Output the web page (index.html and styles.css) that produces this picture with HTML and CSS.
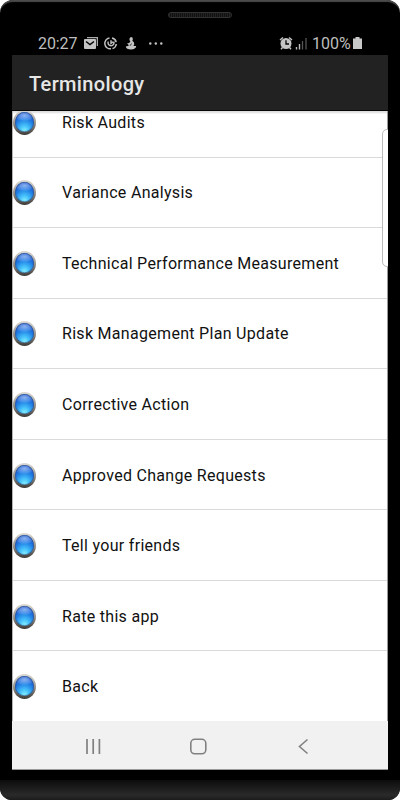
FILE: index.html
```html
<!DOCTYPE html>
<html lang="en">
<head>
<meta charset="utf-8">
<title>Terminology</title>
<link rel="stylesheet" href="styles.css">
</head>
<body>
<div class="phone">
  <div class="speaker"></div>
  <header class="status">
    <span class="clock">20:27</span>
    <svg class="notifications" width="80" height="16" viewBox="0 0 80 16">
      <path d="M3 1h11v9h-1.300V2.300H3z" fill="#aaa"/>
      <rect x="0" y="3" width="12" height="10" rx="1" fill="#c4c4c4"/>
      <path d="M2 5.500l4 3 4-3" fill="none" stroke="#000" stroke-width="1.400"/>
      <g fill="none" stroke="#bebebe" stroke-width="1.500">
        <path d="M25.500 2a5.400 5.400 0 0 0 1.500 10.800M28 2.100a5.400 5.400 0 0 1 4.200 4M32.300 8a5.400 5.400 0 0 1-3.800 4.600"/>
        <path d="M24.300 5.500a3 3 0 1 0 5.400 0M27 4.300v3l2-1.500"/>
      </g>
      <path d="M45.500 2.500l1.300-1.500 1.700.5.300 2-.5 1.300 1.700 1.700.2 2-.8 1.500h2.800c0 2-2.200 3.500-5.200 3.500s-5.200-1.300-5.200-3l2-.5 1.200-.8-2-1.700 2.200-.5 1.300-1.700-1-1z" fill="#c4c4c4"/>
      <path d="M47.500 7.500l-1.500 2.300" stroke="#222" stroke-width=".9"/>
      <g fill="#c4c4c4"><circle cx="66.300" cy="7.500" r="1.200"/><circle cx="71.800" cy="7.500" r="1.200"/><circle cx="77.300" cy="7.500" r="1.200"/></g>
    </svg>
    <svg class="signals" width="30" height="16" viewBox="0 0 30 16">
      <circle cx="7" cy="7.500" r="5.500" fill="#c4c4c4"/>
      <path d="M1 4l3-2.500M13 4l-3-2.500M3.500 11.500L2 13.200M10.500 11.500l1.500 1.700" stroke="#c4c4c4" stroke-width="1.500"/>
      <path d="M7 4.300V8h3" fill="none" stroke="#000" stroke-width="1.300"/>
      <path d="M17.500 11v2.500M20.500 8v5.500" stroke="#bbb" stroke-width="1.400"/>
      <path d="M23.500 5v8.500M27 2v11.500" stroke="#555" stroke-width="1.300"/>
    </svg>
    <span class="percent">100%</span>
    <svg class="battery" width="9" height="14" viewBox="0 0 9 14"><path d="M2.500 1h4v1.500H9V13H0V2.500h2.500z" fill="#c8c8c8"/></svg>
  </header>
  <main class="screen">
    <h1 class="title">Terminology</h1>
    <ul class="list">
      <li class="row"><i class="orb"></i><span>Risk Audits</span></li>
      <li class="row"><i class="orb"></i><span>Variance Analysis</span></li>
      <li class="row"><i class="orb"></i><span>Technical Performance Measurement</span></li>
      <li class="row"><i class="orb"></i><span>Risk Management Plan Update</span></li>
      <li class="row"><i class="orb"></i><span>Corrective Action</span></li>
      <li class="row"><i class="orb"></i><span>Approved Change Requests</span></li>
      <li class="row"><i class="orb"></i><span>Tell your friends</span></li>
      <li class="row"><i class="orb"></i><span>Rate this app</span></li>
      <li class="row"><i class="orb"></i><span>Back</span></li>
    </ul>
    <nav class="nav">
      <svg width="376" height="48" viewBox="0 0 376 48" fill="none" stroke="#818181">
        <path d="M75 18v15M81.200 18v15M87.400 18v15" stroke-width="1.700"/>
        <rect x="178.800" y="18.300" width="15" height="14.500" rx="4" stroke-width="1.600"/>
        <path d="M295.500 18.500l-8 7 8 7" stroke-width="1.600"/>
      </svg>
    </nav>
    <div class="edge-panel"></div>
  </main>
  <div class="chin"></div>
</div>
</body>
</html>
```
FILE: styles.css
```css
* { box-sizing: border-box; }
body { margin: 0; background: #fff; font-family: Roboto, sans-serif; }
.phone {
  width: 400px; height: 800px; overflow: hidden;
  display: flex; flex-direction: column;
  background: #000; border-radius: 13px 13px 12px 12px;
  box-shadow: inset 0 3px 1px -1px #4b4b4b;
}
.speaker {
  flex: none; width: 64px; height: 6px; margin: 12px auto 0;
  border: 1px solid #333; border-radius: 3px;
  background: repeating-linear-gradient(90deg, #222 0 1px, #111 1px 2px);
}
.status {
  flex: none; height: 37px; padding: 14px 38px 0;
  display: flex; align-items: flex-start; color: #bebebe;
  font-size: 16px; line-height: 24px;
}
.clock { width: 46px; letter-spacing: -0.1px; }
.notifications { margin-top: 4px; }
.signals { margin: 4px 3px 0 auto; }
.percent { width: 37px; white-space: nowrap; }
.battery { margin: 4px 0 0 4px; }
.screen {
  position: relative; flex: none; height: 715px; margin: 0 12px;
  display: flex; flex-direction: column; overflow: hidden;
  background: #fff;
}
.title {
  flex: none; height: 56px; margin: 0; padding-left: 17px;
  background: #222; border-bottom: 1px solid #080808; color: #e6e6e6;
  font-size: 20px; font-weight: 500; line-height: 58px; letter-spacing: 0.35px;
}
.list {
  flex: 1; min-height: 0; margin: 0; padding: 0; overflow: hidden;
  display: flex; flex-direction: column; justify-content: flex-end;
  list-style: none; border-left: 1px solid #b5b5b5; border-right: 1px solid #999;
  box-shadow: inset 0 3px 2px -1px #ddd;
}
.row {
  flex: none; height: 70.57px; padding-top: 1px;
  display: flex; align-items: center; gap: 25px;
  border-top: 1px solid #dadada;
  color: #111; font-size: 16px; letter-spacing: 0.3px;
}
.orb {
  flex: none; width: 23px; height: 25px; margin-left: 0; margin-right: 1px; border-radius: 50%;
  border: 2px solid transparent; border-width: 2px 2.5px 3px;
  background:
    radial-gradient(ellipse 55% 28% at 50% 18%, rgba(200, 222, 255, 0.65), rgba(150, 195, 255, 0.25) 80%, transparent) padding-box,
    radial-gradient(ellipse 75% 85% at 50% 98%, #8ff6ff 0%, #45c2fb 35%, #2384e6 70%, #1a58cf 100%) padding-box,
    linear-gradient(#dedad5, #99958f 50%, #3d3a37) border-box;
  box-shadow: inset 0 0 1px 0.5px #2a4a80;
}
.nav { flex: none; height: 49px; background: #f1f1f1; border-bottom: 1px solid #999; }
.nav svg { display: block; }
.edge-panel {
  position: absolute; top: 74px; right: -4px; width: 10px; height: 138px;
  border: 1px solid #bbb; border-radius: 6px; background: #fff;
}
.chin { flex: none; height: 20px; margin-top: 10px; background: linear-gradient(#0c0c0c, #2a2a2a 75%, #1c1c1c); }
```
